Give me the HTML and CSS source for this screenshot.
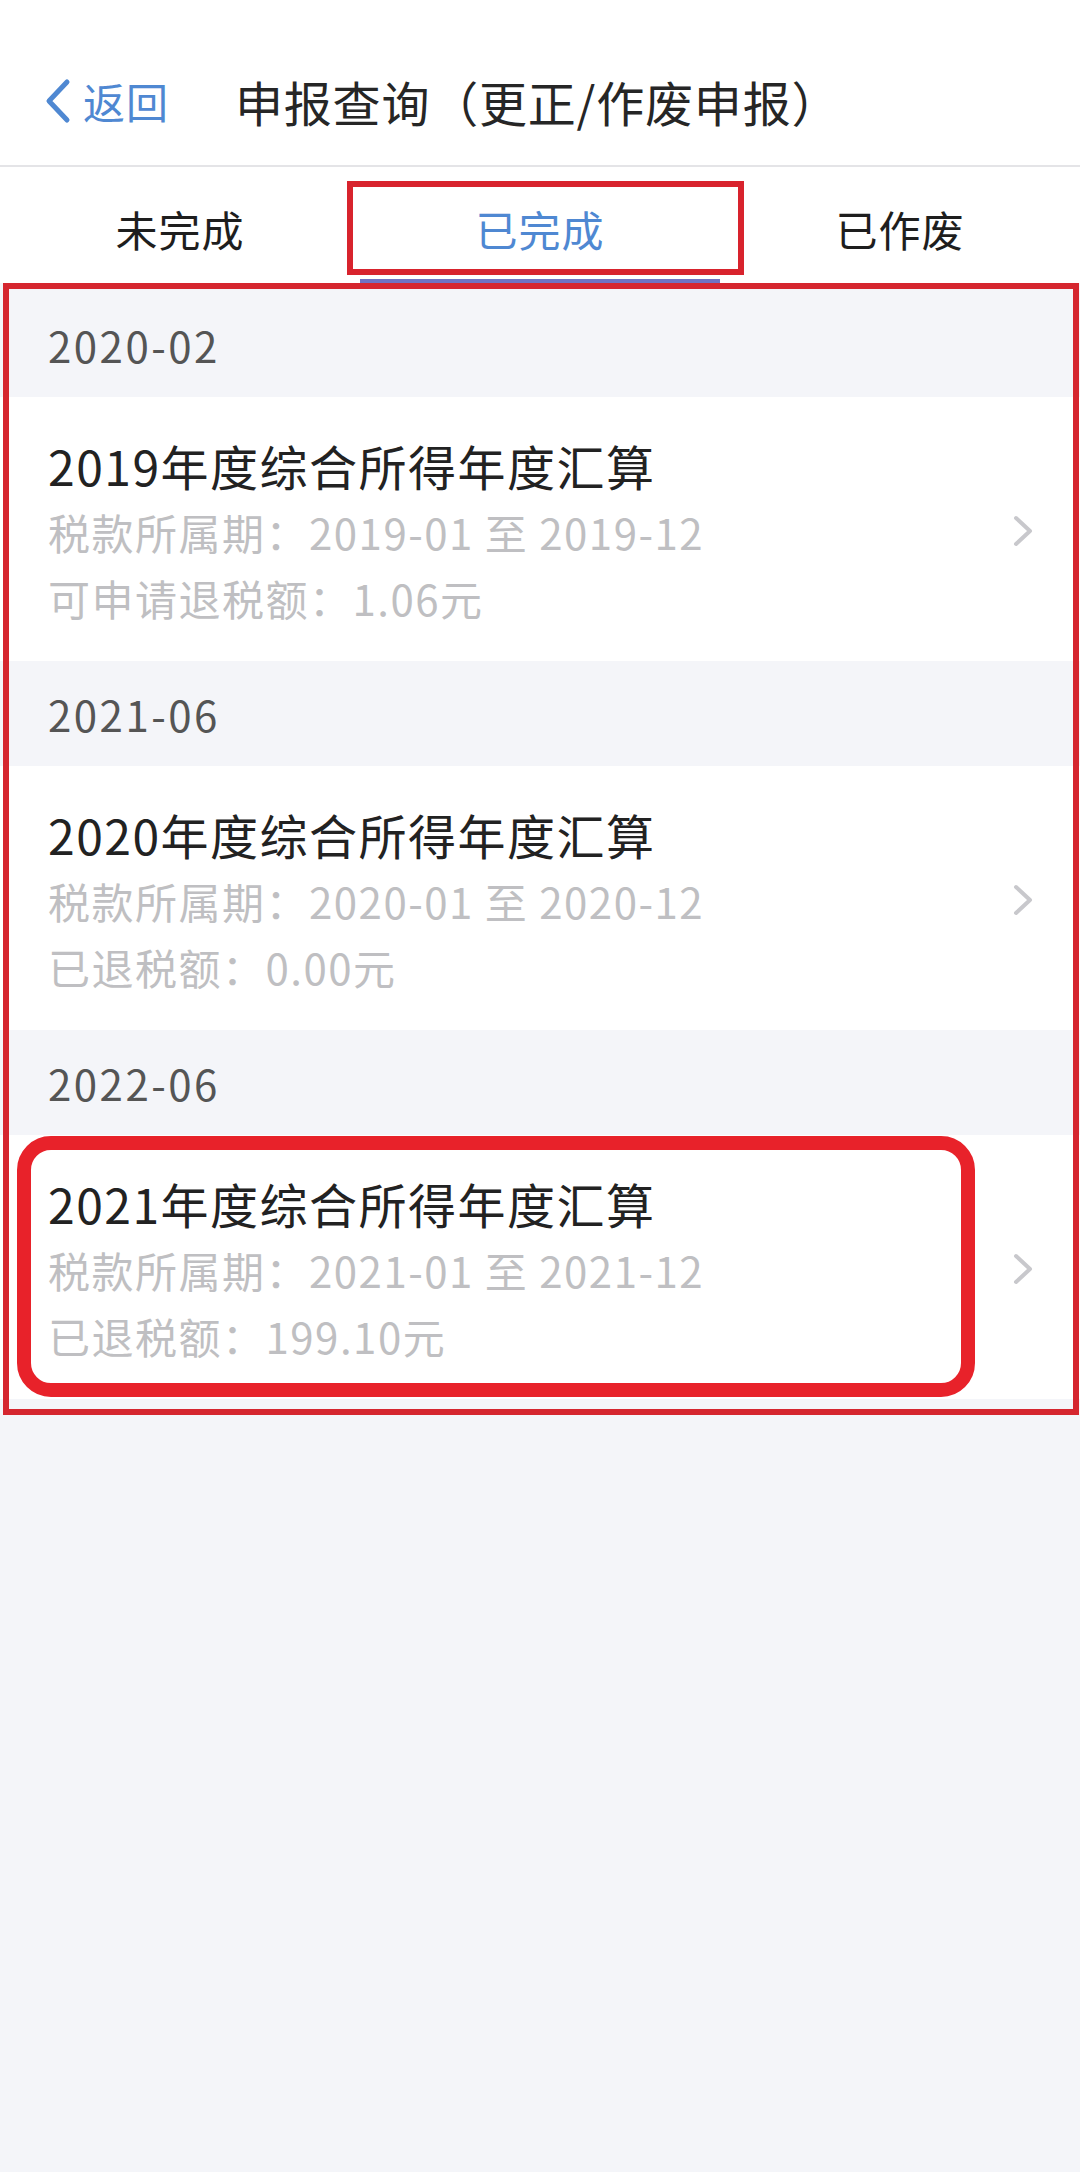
FILE: index.html
```html
<!DOCTYPE html>
<html lang="zh-CN">
  <head>
    <meta charset="UTF-8" />
    <meta name="viewport" content="width=device-width, initial-scale=1" />
    <title>申报查询（更正/作废申报）</title>
    <link rel="stylesheet" href="styles.css">
  </head>
  <body>
    <!-- Top navigation -->
    <header class="navbar">
      <a class="back" href="#">
        <svg class="back-icon" viewBox="0 0 26 46" width="26" height="46">
          <polyline points="22,4 4,23 22,42" />
        </svg>
        <span>返回</span>
      </a>
      <h1 class="nav-title">申报查询（更正/作废申报）</h1>
    </header>

    <!-- Status tabs -->
    <nav class="tabs">
      <div class="tab">未完成</div>
      <div class="tab active">
        已完成
        <span class="mark-box"></span>
      </div>
      <div class="tab">已作废</div>
    </nav>

    <!-- Completed declarations -->
    <section class="records">
      <div class="group-date">2020-02</div>
      <div class="record">
        <div class="record-info">
          <div class="record-title">2019年度综合所得年度汇算</div>
          <div class="record-line">税款所属期：2019-01 至 2019-12</div>
          <div class="record-line">可申请退税额：1.06元</div>
        </div>
        <svg class="arrow" viewBox="0 0 20 32" width="20" height="32">
          <polyline points="3,3 17,16 3,29" />
        </svg>
      </div>

      <div class="group-date">2021-06</div>
      <div class="record">
        <div class="record-info">
          <div class="record-title">2020年度综合所得年度汇算</div>
          <div class="record-line">税款所属期：2020-01 至 2020-12</div>
          <div class="record-line">已退税额：0.00元</div>
        </div>
        <svg class="arrow" viewBox="0 0 20 32" width="20" height="32">
          <polyline points="3,3 17,16 3,29" />
        </svg>
      </div>

      <div class="group-date">2022-06</div>
      <div class="record">
        <div class="record-info">
          <div class="record-title">2021年度综合所得年度汇算</div>
          <div class="record-line">税款所属期：2021-01 至 2021-12</div>
          <div class="record-line">已退税额：199.10元</div>
        </div>
        <svg class="arrow" viewBox="0 0 20 32" width="20" height="32">
          <polyline points="3,3 17,16 3,29" />
        </svg>
        <!-- highlight around this record -->
        <span class="mark-round"></span>
      </div>

      <!-- highlight around the whole list -->
      <span class="mark-frame"></span>
    </section>
  </body>
</html>
```

FILE: styles.css
```css
/* Reset & Base */
* {
  box-sizing: border-box;
  margin: 0;
  padding: 0;
}
html,
body {
  min-height: 100%;
  font-family: "Noto Sans CJK SC", "Noto Sans", sans-serif;
  background: #f4f5f9;
  color: #222;
}
/* Navigation bar */
.navbar {
  height: 167px;
  padding-top: 36px;
  display: flex;
  align-items: center;
  background: #fff;
  border-bottom: 2px solid #e4e4e7;
}
.back {
  display: flex;
  align-items: center;
  margin-left: 45px;
  color: #4f88d2;
  text-decoration: none;
  font-size: 42px;
  letter-spacing: 1px;
}
.back-icon {
  fill: none;
  stroke: #4f88d2;
  stroke-width: 5;
  stroke-linecap: round;
  stroke-linejoin: round;
  margin-right: 12px;
}
.nav-title {
  margin-left: 66px;
  font-size: 48px;
  font-weight: normal;
  letter-spacing: 0.8px;
  color: #262626;
}
/* Tabs */
.tabs {
  display: grid;
  grid-template-columns: repeat(3, 1fr);
  height: 116px;
  background: #fff;
}
.tab {
  position: relative;
  display: flex;
  justify-content: center;
  align-items: center;
  padding-top: 10px;
  font-size: 42px;
  letter-spacing: 1px;
  color: #1e1e1e;
  border-bottom: 4px solid transparent;
}
.tab.active {
  color: #4f88d2;
  border-bottom-color: #6f72c2;
}
/* Red annotation around the active tab */
.mark-box {
  position: absolute;
  top: 14px;
  bottom: 4px;
  left: -13px;
  right: -24px;
  border: 6px solid #d8232d;
}
/* Record list */
.records {
  position: relative;
  padding-top: 9px;
  padding-bottom: 16px;
}
.group-date {
  height: 105px;
  display: flex;
  align-items: center;
  padding-left: 48px;
  font-size: 42px;
  letter-spacing: 2.5px;
  color: #555;
}
.record {
  position: relative;
  display: flex;
  align-items: center;
  height: 264px;
  padding: 34px 47px 30px 48px;
  background: #fff;
}
.record-info {
  flex: 1;
}
.record-title {
  font-size: 48px;
  line-height: 68px;
  letter-spacing: 1.5px;
  color: #222;
}
.record-line {
  font-size: 42px;
  line-height: 66px;
  letter-spacing: 1.5px;
  color: #bfbfc2;
}
.arrow {
  fill: none;
  stroke: #c8c8cc;
  stroke-width: 4;
  stroke-linecap: round;
  stroke-linejoin: round;
}
/* Red annotations over the list */
.mark-round {
  position: absolute;
  top: 1px;
  bottom: 2px;
  left: 17px;
  width: 958px;
  border: 14px solid #e8222a;
  border-radius: 34px;
}
.mark-frame {
  position: absolute;
  top: 0;
  left: 3px;
  right: 1px;
  bottom: 0;
  border: 6px solid #d5262f;
  pointer-events: none;
}
```
